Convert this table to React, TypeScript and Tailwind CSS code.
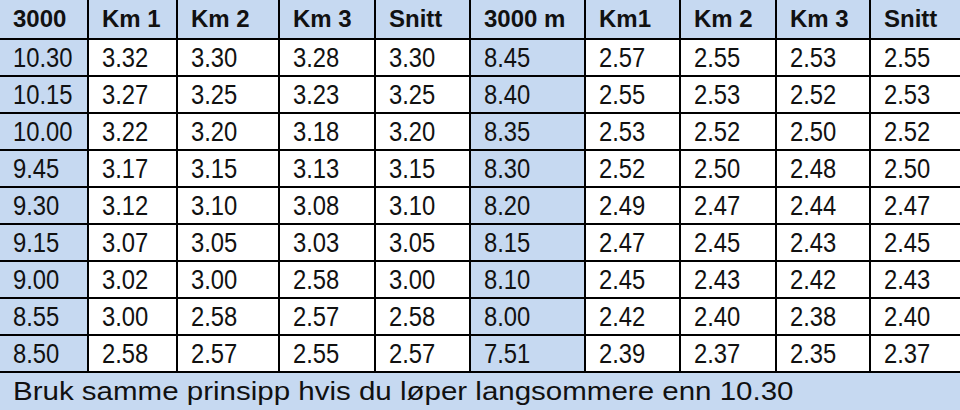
const headers = ["3000", "Km 1", "Km 2", "Km 3", "Snitt", "3000 m", "Km1", "Km 2", "Km 3", "Snitt"];

const rows = [
  ["10.30", "3.32", "3.30", "3.28", "3.30", "8.45", "2.57", "2.55", "2.53", "2.55"],
  ["10.15", "3.27", "3.25", "3.23", "3.25", "8.40", "2.55", "2.53", "2.52", "2.53"],
  ["10.00", "3.22", "3.20", "3.18", "3.20", "8.35", "2.53", "2.52", "2.50", "2.52"],
  ["9.45", "3.17", "3.15", "3.13", "3.15", "8.30", "2.52", "2.50", "2.48", "2.50"],
  ["9.30", "3.12", "3.10", "3.08", "3.10", "8.20", "2.49", "2.47", "2.44", "2.47"],
  ["9.15", "3.07", "3.05", "3.03", "3.05", "8.15", "2.47", "2.45", "2.43", "2.45"],
  ["9.00", "3.02", "3.00", "2.58", "3.00", "8.10", "2.45", "2.43", "2.42", "2.43"],
  ["8.55", "3.00", "2.58", "2.57", "2.58", "8.00", "2.42", "2.40", "2.38", "2.40"],
  ["8.50", "2.58", "2.57", "2.55", "2.57", "7.51", "2.39", "2.37", "2.35", "2.37"],
];

// første kolonne og "3000 m"-kolonnen er blå
const isBlue = (i: number) => i === 0 || i === 5;

export default function App() {
  return (
    <main
      className="w-[960px] h-[410px] overflow-hidden bg-white text-[#111]"
      style={{ fontFamily: '"Liberation Sans", Arial, sans-serif' }}
    >
      <div className="grid grid-cols-[87px_89px_102px_96px_95px_115px_95px_96px_94px_91px]">
        {headers.map((h, i) => (
          <div
            key={"h" + i}
            className={`flex h-[38px] items-center bg-[#c6d9f1] pl-[13px] text-[24px] font-bold ${
              i > 0 ? "border-l-2 border-black" : ""
            }`}
          >
            {h}
          </div>
        ))}

        {rows.map((row, r) =>
          row.map((v, i) => (
            <div
              key={r + "-" + i}
              className={`flex h-[37px] items-center border-t-2 border-black pl-[13px] ${
                i > 0 ? "border-l-2" : ""
              } ${isBlue(i) ? "bg-[#c6d9f1]" : "bg-white"}`}
            >
              <span className="inline-block origin-left scale-x-[0.85] text-[28px] leading-none">
                {v}
              </span>
            </div>
          ))
        )}
      </div>

      <div className="flex h-[39px] items-center border-t-2 border-black bg-[#c6d9f1] pl-[13px]">
        <span className="inline-block origin-left scale-x-[1.18] whitespace-nowrap text-[25px] leading-none">
          Bruk samme prinsipp hvis du løper langsommere enn 10.30
        </span>
      </div>
    </main>
  );
}
